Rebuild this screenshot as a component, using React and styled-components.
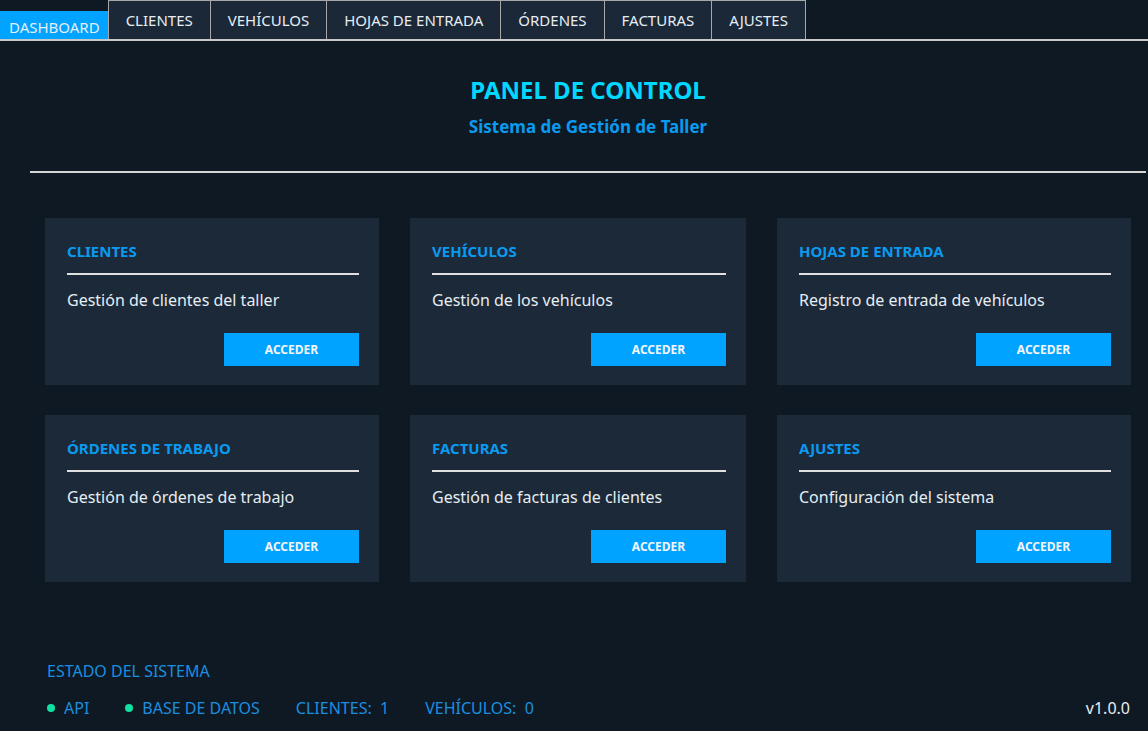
import React from 'react';
import styled, { createGlobalStyle } from 'styled-components';

const GlobalStyle = createGlobalStyle`
  html, body {
    margin: 0;
    padding: 0;
    background: #0f1923;
    font-family: "Noto Sans", "Open Sans", sans-serif;
    color: #e6edf3;
  }
  * { box-sizing: border-box; }
`;

const Page = styled.div`
  min-height: 731px;
  display: flex;
  flex-direction: column;
`;

const TabBar = styled.nav`
  display: flex;
  align-items: flex-end;
  height: 41px;
  border-bottom: 2px solid #c8c8c8;
`;

const Tab = styled.button`
  font-family: inherit;
  font-size: 15px;
  cursor: pointer;
  color: #e6edf3;
  border: ${(p) => (p.$active ? 'none' : '1px solid #a8a8a8')};
  border-bottom: none;
  background: ${(p) => (p.$active ? '#00a3ff' : '#1b2838')};
  height: ${(p) => (p.$active ? '28px' : '39px')};
  padding: ${(p) => (p.$active ? '4px 9px 0' : '0 17px')};
  margin-left: ${(p) => (p.$active ? '0' : '-1px')};
`;

const Main = styled.main`
  flex: 1;
  margin-left: 30px;
  margin-right: 2px;
  display: flex;
  flex-direction: column;
`;

const Header = styled.header`
  text-align: center;
  padding-top: 34px;
  padding-bottom: 33px;
  border-bottom: 2px solid #d6d6d6;
`;

const Title = styled.h1`
  margin: 0;
  font-size: 24px;
  font-weight: 700;
  color: #00d8ff;
  line-height: 30px;
`;

const Subtitle = styled.h2`
  margin: 11px 0 0;
  font-size: 17px;
  font-weight: 700;
  color: #0a9bf0;
  line-height: 22px;
`;

const Grid = styled.section`
  display: grid;
  grid-template-columns: 334px 336px 1fr;
  gap: 30px 31px;
  margin: 45px 15px 0 15px;
`;

const Card = styled.div`
  background: #1b2939;
  padding: 22px 20px 19px 22px;
  display: flex;
  flex-direction: column;
`;

const CardTitle = styled.h3`
  margin: 0;
  font-size: 15px;
  font-weight: 700;
  color: #0a9bf0;
  line-height: 22px;
  padding-bottom: 11px;
  border-bottom: 2px solid #e0e0e0;
`;

const CardText = styled.p`
  margin: 13px 0 0;
  font-size: 16px;
  line-height: 24px;
  color: #e6edf3;
`;

const Button = styled.button`
  align-self: flex-end;
  margin-top: 21px;
  width: 135px;
  height: 33px;
  border: none;
  background: #00a3ff;
  color: #f2f6fa;
  font-family: inherit;
  font-size: 12px;
  font-weight: 700;
  cursor: pointer;
`;

const Footer = styled.footer`
  margin-top: auto;
  padding: 0 16px 11px 17px;
`;

const FooterLabel = styled.div`
  font-size: 16px;
  color: #1a8fe0;
  line-height: 24px;
  margin-bottom: 13px;
`;

const StatusRow = styled.div`
  display: flex;
  align-items: center;
  font-size: 16px;
  line-height: 24px;
`;

const Status = styled.span`
  display: flex;
  align-items: center;
  gap: 9px;
  color: #1a8fe0;
  margin-right: 36px;
`;

const Dot = styled.span`
  width: 8px;
  height: 8px;
  border-radius: 50%;
  background: #10e0a0;
`;

const Version = styled.span`
  margin-left: auto;
  color: #e6edf3;
`;

const tabs = ['DASHBOARD', 'CLIENTES', 'VEHÍCULOS', 'HOJAS DE ENTRADA', 'ÓRDENES', 'FACTURAS', 'AJUSTES'];

const modules = [
  { title: 'CLIENTES', text: 'Gestión de clientes del taller' },
  { title: 'VEHÍCULOS', text: 'Gestión de los vehículos' },
  { title: 'HOJAS DE ENTRADA', text: 'Registro de entrada de vehículos' },
  { title: 'ÓRDENES DE TRABAJO', text: 'Gestión de órdenes de trabajo' },
  { title: 'FACTURAS', text: 'Gestión de facturas de clientes' },
  { title: 'AJUSTES', text: 'Configuración del sistema' },
];

const App = () => {
  return (
    <Page>
      <GlobalStyle />
      <TabBar>
        {tabs.map((t, i) => (
          <Tab key={t} $active={i === 0}>
            {t}
          </Tab>
        ))}
      </TabBar>
      <Main>
        <Header>
          <Title>PANEL DE CONTROL</Title>
          <Subtitle>Sistema de Gestión de Taller</Subtitle>
        </Header>
        <Grid>
          {modules.map((m) => (
            <Card key={m.title}>
              <CardTitle>{m.title}</CardTitle>
              <CardText>{m.text}</CardText>
              <Button>ACCEDER</Button>
            </Card>
          ))}
        </Grid>
        <Footer>
          <FooterLabel>ESTADO DEL SISTEMA</FooterLabel>
          <StatusRow>
            <Status>
              <Dot />
              API
            </Status>
            <Status>
              <Dot />
              BASE DE DATOS
            </Status>
            <Status>CLIENTES:&nbsp; 1</Status>
            <Status>VEHÍCULOS:&nbsp; 0</Status>
            <Version>v1.0.0</Version>
          </StatusRow>
        </Footer>
      </Main>
    </Page>
  );
};

export default App;
